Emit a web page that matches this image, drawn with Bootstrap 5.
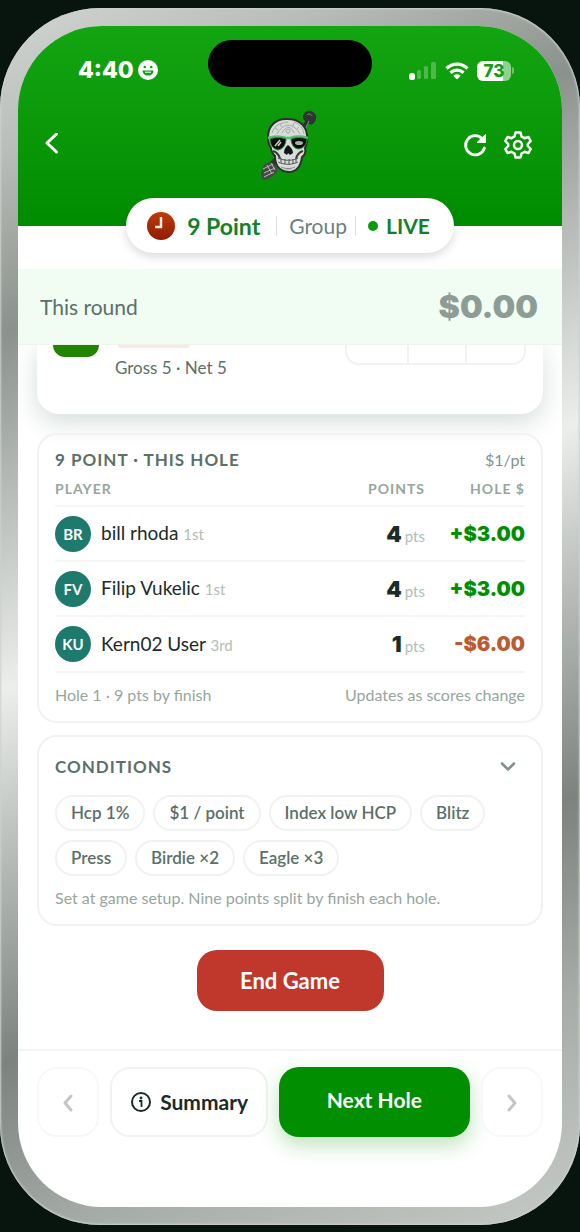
<!DOCTYPE html>
<html lang="en">
<head>
<meta charset="utf-8">
<meta name="viewport" content="width=device-width, initial-scale=1">
<title>9 Point</title>
<link href="https://cdn.jsdelivr.net/npm/bootstrap@5.3.0/dist/css/bootstrap.min.css" rel="stylesheet">
<style>
  :root { --ink:#1c2b27; --slate:#5c6f68; --mist:#98a5a0; --line:#f1f3f1; --green:#018f01; }
  body { background:#08140e; color:var(--ink); font-family:Lato, "Noto Sans", sans-serif; line-height:20px; }
  .stage { padding:8px 0 6px; }
  .bezel { padding:18px; border-radius:100px;
    background:linear-gradient(155deg,#d2d5d2 0%,#b9bdb9 10%,#8b918c 22%,#b4b9b5 32%,#eceeec 46%,#b8bdb9 57%,#7c837e 71%,#a5aca7 84%,#c6cac6 100%);
    box-shadow:inset 0 0 2px 1px #cdd1cd; }
  .screen { background:#fefffe; border-radius:84px; overflow:hidden; }
  .topbar { background:linear-gradient(#14a512,#018c00); height:200px; padding:14px 30px 0 26px; }
  .statusrow { display:grid; grid-template-columns:1fr 164px 1fr; color:#fff; margin-right:-4px; }
  .island { background:#000; height:47px; border-radius:24px; }
  .clock { font:800 23px/28px Inter, sans-serif; padding:13px 0 0 34px; }
  .radios { padding:14px 22px 0 0; }
  .batt { font:800 17px/20px Inter, sans-serif; color:#109d0e; width:34px; height:20px; border-radius:6px; background:linear-gradient(90deg,#fff 76%,#8ed28c 76%); }
  .tip { width:2px; height:7px; margin-left:1px; border-radius:0 2px 2px 0; background:#6cc46a; }
  .navline { display:grid; grid-template-columns:1fr auto 1fr; margin-top:22px; }
  .bare { background:none; border:0; padding:0; line-height:0; }
  .modepill { margin-top:-28px; height:55px; padding:0 24px 0 21px; border-radius:28px; background:#fff; box-shadow:0 4px 10px rgba(0,0,0,.14); font-size:21px; line-height:26px; position:relative; }
  .deep { color:#14802a; }
  .title-lg { font-size:23px; }
  .group-name { color:#6f7f79; }
  .rule { width:1px; height:20px; background:#dfe3df; }
  .livedot { width:10px; height:10px; background:#0a990a; }
  .band { background:#f1fcf2; height:76px; margin-top:16px; padding:0 24px 0 22px; border-bottom:1px solid #eef3ee; position:relative; }
  .band span { font-size:21px; color:var(--slate); }
  .band strong { font:900 32px/36px Inter, sans-serif; color:#8d9c95; }
  .feed { padding:0 19px; }
  .scorecard { background:#fff; height:69px; padding:0 17px 0 16px; border-radius:0 0 22px 22px; box-shadow:0 8px 24px rgba(20,60,40,.17); }
  .holebox { width:46px; height:12px; background:#228500; border-radius:0 0 14px 14px; }
  .tag { width:72px; height:3px; margin-left:3px; background:#fce6df; border-radius:0 0 10px 10px; }
  .tally { font-size:17px; color:var(--slate); margin-top:10px; }
  .stepper { width:181px; height:20px; border:2px solid var(--line); border-top:0; border-radius:0 0 14px 14px; display:grid; grid-template-columns:60px 58px 1fr; }
  .stepper i + i { border-left:2px solid var(--line); }
  .panel { border:2px solid var(--line); border-radius:20px; padding:16px; }
  .hole-panel { margin-top:19px; padding-top:15px; }
  .cond-panel { margin-top:12px; padding-top:20px; }
  .panel h2 { font-size:17px; line-height:20px; font-weight:700; letter-spacing:1px; color:var(--slate); margin:0; }
  .stake { font-size:16px; color:#84938d; }
  .scores { width:100%; table-layout:fixed; }
  .scores th { font-size:14px; line-height:16px; letter-spacing:1px; color:var(--mist); font-weight:700; padding:11px 0 8px; }
  .scores th:nth-child(2), .scores th:nth-child(3) { width:100px; }
  .scores td { height:55px; padding:0; border-top:2px solid #f5f6f5; }
  .face { width:36px; height:36px; background:#1d7a6c; color:#fff; font-weight:700; font-size:15px; }
  .person { font-size:19px; margin-left:10px; }
  .faint { font-size:15px; color:#b3bdb8; }
  .num { font:900 22px/26px Inter, sans-serif; margin-right:3px; }
  .scores .cash { font:900 20px/26px Inter, sans-serif; }
  .up { color:var(--green); } .down { color:#bd5a30; }
  .hint { font-size:16px; color:var(--mist); }
  .footnote { border-top:2px solid #f5f6f5; padding-top:12px; }
  .chips { gap:9px 8px; margin-top:18px; }
  .chip { border:2px solid var(--line); border-radius:18px; height:36px; padding:0 14px; font-size:17px; line-height:31px; font-weight:600; color:var(--slate); }
  .setup-note { margin-top:12px; }
  .endgame { background:#c0382b; color:#fff; font-size:22px; font-weight:700; height:61px; width:187px; border-radius:20px; border:0; }
  .dock { margin-top:38px; border-top:2px solid #f3f5f3; padding:16px 19px 70px; display:grid; grid-template-columns:62fr 157fr 190fr 62fr; gap:11px; }
  .dock button { height:70px; border-radius:20px; border:2px solid var(--line); background:#fff; padding:0; font-size:21px; font-weight:700; color:var(--ink); }
  .dock .ghost { border-color:#f7f8f7; color:#c3c8c5; }
  .dock .go { background:var(--green); border:0; color:#fff; padding-bottom:4px; box-shadow:0 8px 20px rgba(30,150,20,.28); }
</style>
</head>
<body>
<main class="stage">
<div class="bezel">
<div class="screen">
  <header class="topbar">
    <div class="statusrow">
      <div class="d-flex align-items-center gap-1 clock">
        <span>4:40</span>
        <svg width="20" height="20" viewBox="0 0 20 20"><circle cx="10" cy="10" r="10" fill="#fff"/><circle cx="6.800" cy="7" r="1.300" fill="#129f10"/><circle cx="13.200" cy="7" r="1.300" fill="#129f10"/><path d="M4.500 10.500h11c0 3-2.500 5-5.500 5s-5.500-2-5.500-5z" fill="#129f10"/><path d="M7 12.200h6" stroke="#fff" stroke-width="1"/></svg>
      </div>
      <div class="island"></div>
      <div class="d-flex align-items-center justify-content-end radios">
        <svg class="me-2" width="28" height="18" viewBox="0 0 28 18"><rect x="0" y="11" width="6" height="7" rx="2.500" fill="#fff"/><g fill="#4fb84d"><rect x="8" y="8" width="4" height="9" rx="1.500"/><rect x="15" y="4" width="4" height="13" rx="1.500"/><rect x="22" y="0" width="5" height="17" rx="1.500"/></g></svg>
        <svg class="me-2" width="24" height="18" viewBox="0 0 24 18" fill="none" stroke="#fff" stroke-width="3.200"><path d="M1.500 6.500C7.500 .6 16.500 .6 22.500 6.500"/><path d="M5.500 10.700c3.800-3.500 9.200-3.500 13 0"/><path d="M8.300 13.700c2-2 5.400-2 7.400 0L12 17.600z" fill="#fff" stroke="none"/></svg>
        <span class="batt text-center">73</span><span class="tip"></span>
      </div>
    </div>
    <div class="navline align-items-center">
      <button class="bare text-start" aria-label="Back"><svg width="15" height="24" viewBox="0 0 15 24"><path d="M12.500 1L3 10l9.500 9" fill="none" stroke="#fff" stroke-width="3" stroke-linecap="round" stroke-linejoin="round"/></svg></button>
      <svg width="58" height="72" viewBox="0 0 58 72">
        <path d="M42 24l4-8 5-7" stroke="#2a2f2c" stroke-width="4" fill="none"/>
        <path d="M44 8c0-5 6-8 10-5 4 2 4 8 1 11-3 3-6 1-6-2-3 1-5-1-5-4z" fill="#2f3331"/><path d="M48 6c2-2 4-1 5 1M50 12l-4 8" stroke="#8a8f8c" fill="none"/>
        <path d="M18 50L6 63" stroke="#323633" stroke-width="6"/>
        <path d="M5 56l6-3 6 3 2 6-6 6-7 3-3-1-1-6z" fill="#454946"/>
        <path d="M4 60l10-5M5 64l11-5M5 68l10-5M8 56l5 9M12 54l4 7" stroke="#b4b9b6" stroke-width="1" fill="none"/>
        <path d="M29 10C17 9 9 17 9 28c0 5 1 8 3 11 0 4 2 6 4 8 0 7 3 15 13 16 9 0 13-7 14-15 3-2 4-5 3-9 2-4 3-8 2-13C47 16 39 10 29 10z" fill="#d9dcda" stroke="#2b302d" stroke-width="2"/>
        <g fill="none" stroke="#a5aaa7" stroke-width="1"><path d="M13 24c2-7 7-10 16-11M18 25c3-5 6-8 11-9 6 1 9 4 12 9M23 24c2-4 4-5 6-6 3 1 5 3 6 6M35 13c6 2 9 6 10 12"/><circle cx="29" cy="22" r="2"/><path d="M16 19l3 2M21 15l2 3M40 18l-3 3M35 14l-1 3"/></g>
        <path d="M9 29c6-2 12-2 18 0h4c6-2 11-2 18 0" stroke="#5cba72" stroke-width="2.500" fill="none"/>
        <path d="M11 30c5-2 11-2 16 0 0 6-3 10-8 11-5-1-8-5-8-11zM32 30c5-2 11-2 16 0 0 5-3 9-8 10-5 0-8-5-8-10z" fill="#090d0b" stroke="#2f8e45" stroke-width="1"/>
        <path d="M16 37l5-6M19 37l3-4" stroke="#c5cec7" stroke-width="1.500"/><ellipse cx="40" cy="34" rx="4" ry="2" fill="#a5b0a8"/>
        <path d="M29 36c-3 2-4 5-4 8l3 2 1-2 2 2 3-2c0-3-2-6-5-8z" fill="#111513"/>
        <path d="M14 42c3 1 6 3 7 8M44 42c-3 1-6 3-7 8" stroke="#343936" stroke-width="2" fill="none"/>
        <path d="M19 49c6 3 15 3 20 0M19 53c6 3 14 3 20 0M22 49v5M26 50v5M30 50v6M34 50v5M37 49v5" stroke="#555a57" stroke-width="1" fill="none"/>
        <path d="M22 58c4 2 10 2 14 0M27 60h5" stroke="#858b87" stroke-width="1" fill="none"/>
      </svg>
      <div class="d-flex justify-content-end align-items-center gap-3">
        <button class="bare" aria-label="Refresh"><svg width="26" height="26" viewBox="0 0 26 26"><path d="M20.500 7A9.600 9.600 0 1 0 22.400 16" fill="none" stroke="#fff" stroke-width="2.800" stroke-linecap="round"/><path d="M23.500 2.500v8h-8.500z" fill="#fff" stroke="#fff" stroke-width="1" stroke-linejoin="round"/></svg></button>
        <button class="bare" aria-label="Settings"><svg width="28" height="30" viewBox="0 0 28 30" fill="none" stroke="#fff" stroke-width="2.500" stroke-linejoin="round"><path d="M11.500 2.500h5l1 4 3 1.700 4-1.200 2.200 4-2.900 3v2l2.900 3-2.200 4-4-1.200-3 1.700-1 4h-5l-1-4-3-1.700-4 1.200-2.200-4 2.900-3v-2l-2.900-3 2.200-4 4 1.200 3-1.700z"/><circle cx="14" cy="15" r="4"/></svg></button>
      </div>
    </div>
  </header>

  <div class="d-flex justify-content-center">
    <div class="modepill d-flex align-items-center">
      <svg width="28" height="28" viewBox="0 0 28 28"><defs><linearGradient id="dial" x1="0" y1="0" x2="0" y2="1"><stop offset="0" stop-color="#bd3d08"/><stop offset="1" stop-color="#8f1c05"/></linearGradient></defs><circle cx="14" cy="14" r="14" fill="url(#dial)"/><path d="M14 5v10H8" fill="none" stroke="#ffe9e0" stroke-width="2.500"/></svg>
      <span class="deep fw-bold title-lg ms-2 ps-1">9 Point</span>
      <span class="rule ms-3 me-2"></span>
      <span class="group-name ms-1">Group</span>
      <span class="rule ms-2 me-2"></span>
      <span class="livedot rounded-circle ms-1 me-2"></span>
      <span class="deep fw-bold">LIVE</span>
    </div>
  </div>

  <div class="band d-flex justify-content-between align-items-center">
    <span>This round</span><strong>$0.00</strong>
  </div>

  <div class="feed">
    <section class="scorecard d-flex">
      <div class="holebox"></div>
      <div class="ms-3 flex-grow-1">
        <div class="tag"></div>
        <div class="tally">Gross 5 · Net 5</div>
      </div>
      <div class="stepper"><i></i><i></i><i></i></div>
    </section>

    <section class="panel hole-panel">
      <div class="d-flex justify-content-between">
        <h2>9 POINT · THIS HOLE</h2><span class="stake">$1/pt</span>
      </div>
      <table class="scores">
        <thead><tr><th>PLAYER</th><th class="text-end">POINTS</th><th class="text-end">HOLE $</th></tr></thead>
        <tbody>
          <tr><td><div class="d-flex align-items-center"><span class="face rounded-circle d-flex align-items-center justify-content-center">BR</span><span class="person">bill rhoda <span class="faint">1st</span></span></div></td><td class="text-end"><span class="num">4</span><span class="faint">pts</span></td><td class="text-end cash up">+$3.00</td></tr>
          <tr><td><div class="d-flex align-items-center"><span class="face rounded-circle d-flex align-items-center justify-content-center">FV</span><span class="person">Filip Vukelic <span class="faint">1st</span></span></div></td><td class="text-end"><span class="num">4</span><span class="faint">pts</span></td><td class="text-end cash up">+$3.00</td></tr>
          <tr><td><div class="d-flex align-items-center"><span class="face rounded-circle d-flex align-items-center justify-content-center">KU</span><span class="person">Kern02 User <span class="faint">3rd</span></span></div></td><td class="text-end"><span class="num">1</span><span class="faint">pts</span></td><td class="text-end cash down">-$6.00</td></tr>
        </tbody>
      </table>
      <div class="d-flex justify-content-between hint footnote"><span>Hole 1 · 9 pts by finish</span><span>Updates as scores change</span></div>
    </section>

    <section class="panel cond-panel">
      <div class="d-flex justify-content-between align-items-center pe-2">
        <h2>CONDITIONS</h2>
        <button class="bare" aria-label="Collapse conditions"><svg width="18" height="12" viewBox="0 0 18 12"><path d="M3 2.500l6 6 6-6" fill="none" stroke="#80908a" stroke-width="2.500" stroke-linecap="round" stroke-linejoin="round"/></svg></button>
      </div>
      <div class="d-flex flex-wrap chips">
        <span class="chip">Hcp 1%</span><span class="chip">$1 / point</span><span class="chip">Index low HCP</span><span class="chip">Blitz</span><span class="chip">Press</span><span class="chip">Birdie ×2</span><span class="chip">Eagle ×3</span>
      </div>
      <div class="hint setup-note">Set at game setup. Nine points split by finish each hole.</div>
    </section>

    <div class="text-center mt-4"><button class="endgame">End Game</button></div>
  </div>

  <footer class="dock">
    <button class="ghost" aria-label="Previous hole"><svg width="12" height="20" viewBox="0 0 12 20"><path d="M9 3l-6 7 6 7" fill="none" stroke="currentColor" stroke-width="3" stroke-linecap="round" stroke-linejoin="round"/></svg></button>
    <button class="d-flex align-items-center justify-content-center"><svg class="me-2" width="22" height="22" viewBox="0 0 22 22"><circle cx="11" cy="11" r="9" fill="none" stroke="#1c2b27" stroke-width="2"/><circle cx="11" cy="7" r="1.400" fill="#1c2b27"/><path d="M9 10h2.500v6" fill="none" stroke="#1c2b27" stroke-width="1.800"/></svg>Summary</button>
    <button class="go">Next Hole</button>
    <button class="ghost" aria-label="Following hole"><svg width="12" height="20" viewBox="0 0 12 20"><path d="M3 3l6 7-6 7" fill="none" stroke="currentColor" stroke-width="3" stroke-linecap="round" stroke-linejoin="round"/></svg></button>
  </footer>
</div>
</div>
</main>
<script src="https://cdn.jsdelivr.net/npm/bootstrap@5.3.0/dist/js/bootstrap.bundle.min.js"></script>
</body>
</html>
